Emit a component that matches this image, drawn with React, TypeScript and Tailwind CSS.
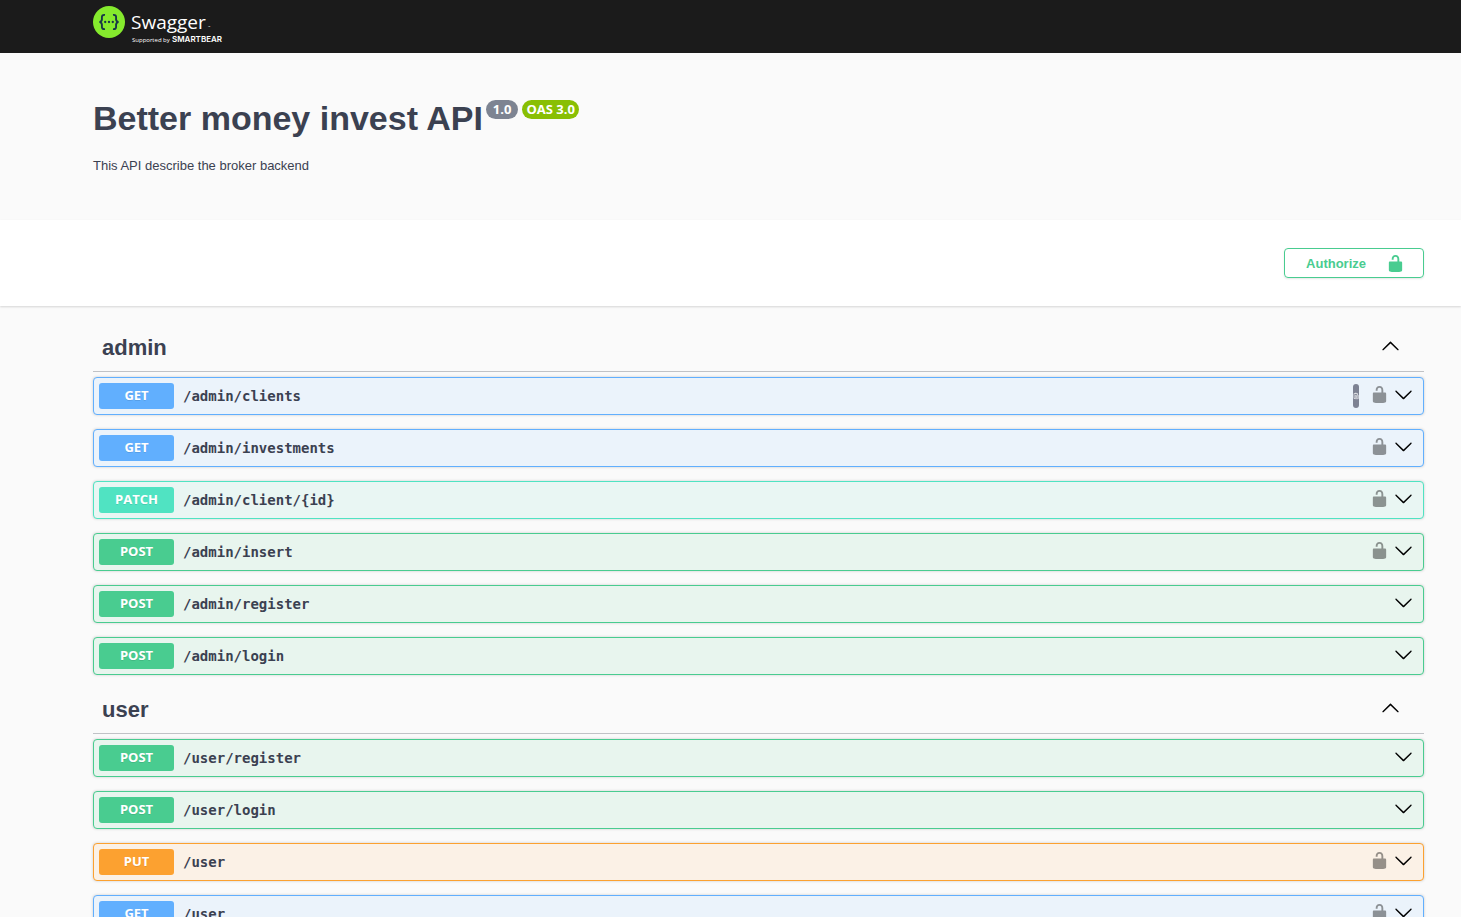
import { useState } from "react";

type Method = "GET" | "PATCH" | "POST" | "PUT";

interface Operation {
  method: Method;
  path: string;
  secured?: boolean;
  copy?: boolean;
}

interface Tag {
  name: string;
  operations: Operation[];
}

const tags: Tag[] = [
  {
    name: "admin",
    operations: [
      { method: "GET", path: "/admin/clients", secured: true, copy: true },
      { method: "GET", path: "/admin/investments", secured: true },
      { method: "PATCH", path: "/admin/client/{id}", secured: true },
      { method: "POST", path: "/admin/insert", secured: true },
      { method: "POST", path: "/admin/register" },
      { method: "POST", path: "/admin/login" },
    ],
  },
  {
    name: "user",
    operations: [
      { method: "POST", path: "/user/register" },
      { method: "POST", path: "/user/login" },
      { method: "PUT", path: "/user", secured: true },
      { method: "GET", path: "/user", secured: true },
    ],
  },
];

const rowStyle: Record<Method, string> = {
  GET: "border-[#61affe] bg-[#ebf3fb]",
  PATCH: "border-[#50e3c2] bg-[#e9f6f3]",
  POST: "border-[#49cc90] bg-[#e8f5ee]",
  PUT: "border-[#fca130] bg-[#fbf1e6]",
};

const badgeStyle: Record<Method, string> = {
  GET: "bg-[#61affe]",
  PATCH: "bg-[#50e3c2]",
  POST: "bg-[#49cc90]",
  PUT: "bg-[#fca130]",
};

function UnlockIcon() {
  return (
    <svg viewBox="0 0 20 20" className="size-[19px]" fill="currentColor" aria-hidden="true">
      <path d="M15.8 8H14V5.6C14 2.703 12.665 1 10 1 7.334 1 6 2.703 6 5.6V6h2v-.801C8 3.754 8.797 3 10 3c1.203 0 2 .754 2 2.199V8H4c-.553 0-1 .646-1 1.199V17c0 .549.428 1.139.951 1.307l1.197.387C5.672 18.861 6.55 19 7.1 19h5.8c.549 0 1.428-.139 1.951-.307l1.196-.387c.524-.167.953-.757.953-1.306V9.199C17 8.646 16.352 8 15.8 8z" />
    </svg>
  );
}

function ArrowIcon({ up = false }: { up?: boolean }) {
  return (
    <svg viewBox="0 0 20 20" className="size-[19px]" fill="currentColor" aria-hidden="true">
      <path
        d={
          up
            ? "M17.418 14.908c.272.268.709.268.979 0s.271-.701 0-.969l-7.908-7.83c-.27-.268-.707-.268-.979 0l-7.908 7.83c-.27.268-.27.701 0 .969.271.268.709.268.979 0L10 7.767l7.418 7.141z"
            : "M17.418 6.109c.272-.268.709-.268.979 0s.271.701 0 .969l-7.908 7.83c-.27.268-.707.268-.979 0l-7.908-7.83c-.27-.268-.27-.701 0-.969.271-.268.709-.268.979 0L10 13.25l7.418-7.141z"
        }
      />
    </svg>
  );
}

function Logo() {
  return (
    <a href="#top" className="flex items-start text-white">
      <svg viewBox="0 0 32 32" className="size-8" aria-hidden="true">
        <circle cx="16" cy="16" r="16" fill="#85ea2d" />
        <g fill="none" stroke="#173647" strokeWidth="1.9">
          <path d="M12 8.9c-2.6-.2-3.2.8-3.1 2.7.3 2.5.1 4-2.4 4.4 2.5.4 2.7 1.900 2.4 4.4-.1 1.900.5 2.900 3.100 2.700" />
          <path d="M20 8.9c2.6-.2 3.2.8 3.1 2.700-.3 2.500-.1 4 2.400 4.400-2.500.4-2.700 1.900-2.400 4.400.1 1.900-.5 2.900-3.100 2.700" />
        </g>
        <g fill="#173647">
          <circle cx="12.2" cy="16" r="1.15" />
          <circle cx="16" cy="16" r="1.15" />
          <circle cx="19.8" cy="16" r="1.15" />
        </g>
      </svg>
      <svg viewBox="0 0 104 40" className="h-10 w-[104px]" fill="#ffffff" role="img" aria-label="Swagger, supported by SmartBear">
        <text x="6" y="23" fontFamily="'Open Sans', sans-serif" fontSize="19">Swagger</text>
        <text x="83" y="22" fontFamily="'Open Sans', sans-serif" fontSize="3">™</text>
        <text x="7" y="36" fontFamily="'Open Sans', sans-serif" fontSize="6">Supported by</text>
        <text x="47" y="36" fontFamily="Inter, sans-serif" fontWeight="600" fontSize="8">SMARTBEAR</text>
      </svg>
    </a>
  );
}

function OperationRow({ method, path, secured, copy }: Operation) {
  return (
    <li className={`flex items-center rounded-[4px] border p-[5px] shadow-[0_0_3px_rgba(0,0,0,0.19)] ${rowStyle[method]}`}>
      <button type="button" className="flex min-w-0 flex-1 items-center gap-[9px] text-left">
        <span
          className={`w-[75px] rounded-[3px] pb-0.5 text-center font-['Open_Sans',sans-serif] text-[13px] leading-6 font-bold text-white [text-shadow:0_1px_0_rgba(0,0,0,0.1)] ${badgeStyle[method]}`}
        >
          {method}
        </span>
        <span className="font-['DejaVu_Sans_Mono',monospace] text-[14px] leading-5 font-bold break-words">{path}</span>
      </button>
      <div className="flex items-center gap-[5px] pr-[5px] pb-1 text-black">
        {copy && (
          <button type="button" aria-label="Copy to clipboard" className="mr-[6px] -mb-1 flex h-6 w-[6px] items-center justify-center rounded-[3px] bg-[#7d8293]">
            <svg viewBox="0 0 6 8" className="h-2 w-[6px]" fill="none" stroke="#ffffff" strokeWidth="0.6" aria-hidden="true">
              <path d="M4.500 3V1.500H1v5h1M2 1.200h1.500M2.300 3.300h3v3.400h-3zM3 4.500h1.600M3 5.600h1.600" />
            </svg>
          </button>
        )}
        {secured && (
          <button type="button" aria-label="Authorization button unlocked" className="opacity-40">
            <UnlockIcon />
          </button>
        )}
        <button type="button" aria-label={`Expand ${method} ${path}`}>
          <ArrowIcon />
        </button>
      </div>
    </li>
  );
}

function TagSection({ name, operations }: Tag) {
  const [open, setOpen] = useState(true);
  return (
    <section>
      <h2 className="border-b border-[rgba(59,65,81,0.3)] text-[22px] leading-[47px] font-bold">
        <button type="button" aria-expanded={open} onClick={() => setOpen(!open)} className="flex w-full items-start justify-between pt-0.5 pr-6 pl-[9px]">
          {name}
          <span className="pt-3 text-black">
            <ArrowIcon up={open} />
          </span>
        </button>
      </h2>
      {open && (
        <ul className="mt-[5px] flex flex-col gap-[14px]">
          {operations.map((operation) => (
            <OperationRow key={operation.method + operation.path} {...operation} />
          ))}
        </ul>
      )}
    </section>
  );
}

export default function App() {
  return (
    <div id="top" className="min-h-screen bg-[#fafafa] font-['Liberation_Sans',Arial,sans-serif] text-[#3b4151]">
      <header className="bg-[#1b1b1b] pt-[6px] pr-[37px] pb-[7px] pl-[93px]">
        <Logo />
      </header>
      <main>
        <section className="pt-11 pr-[37px] pb-11 pl-[93px]">
          <div className="flex items-start gap-[3px]">
            <h1 className="text-[34px] leading-[42px] font-bold">Better money invest API</h1>
            <div className="flex gap-1 pt-[3px] font-['Open_Sans',sans-serif] text-[13px] leading-[19px] font-bold text-white">
              <span className="rounded-full bg-[#7d8492] px-[7px]">1.0</span>
              <span className="rounded-full bg-[#89bf04] px-1">OAS 3.0</span>
            </div>
          </div>
          <p className="mt-[17px] text-[13px] leading-5">This API describe the broker backend</p>
        </section>
        <section className="flex justify-end bg-white py-7 pr-[37px] pl-[93px] shadow-[0_1px_2px_rgba(0,0,0,0.15)]">
          <button
            type="button"
            className="flex h-[30px] items-center gap-5 rounded-[4px] border border-[#49cc90] pr-[18px] pl-[21px] text-[13px] font-bold text-[#49cc90] shadow-[0_1px_2px_rgba(0,0,0,0.1)]"
          >
            <span className="pt-0.5">Authorize</span>
            <UnlockIcon />
          </button>
        </section>
        <div className="flex flex-col gap-[9px] pt-4 pr-[37px] pb-14 pl-[93px]">
          {tags.map((tag) => (
            <TagSection key={tag.name} {...tag} />
          ))}
        </div>
      </main>
    </div>
  );
}
